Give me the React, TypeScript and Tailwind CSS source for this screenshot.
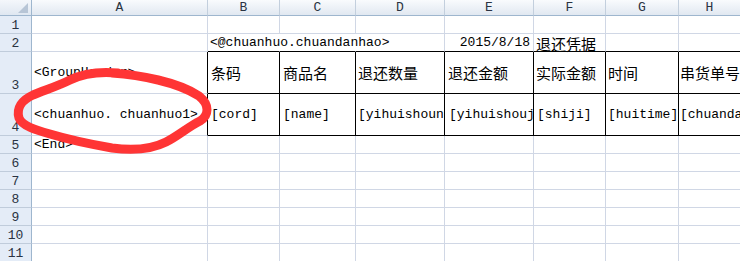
import React from "react";

type CellData = {
  text: string;
  cjk?: boolean;
  right?: boolean;
  clip?: boolean;
  spill?: boolean;
  pad?: string;
};

const columns = ["A", "B", "C", "D", "E", "F", "G", "H"];
const rows = [1, 2, 3, 4, 5, 6, 7, 8, 9, 10, 11];

// sheet contents, keyed by cell address
const cells: Record<string, CellData> = {
  B2: { text: "<@chuanhuo.chuandanhao>", spill: true, pad: "pl-[2px]" },
  E2: { text: "2015/8/18", right: true, pad: "pr-[3px]" },
  F2: { text: "退还凭据", cjk: true, pad: "pl-[2px] pt-[2px]" },
  A3: { text: "<GroupHeader>", pad: "pl-[2px]" },
  B3: { text: "条码", cjk: true, pad: "pl-[3px]" },
  C3: { text: "商品名", cjk: true, pad: "pl-[3px]" },
  D3: { text: "退还数量", cjk: true, pad: "pl-[2px]" },
  E3: { text: "退还金额", cjk: true, pad: "pl-[3px]" },
  F3: { text: "实际金额", cjk: true, pad: "pl-[2px]" },
  G3: { text: "时间", cjk: true, pad: "pl-[2px]" },
  H3: { text: "串货单号", cjk: true, pad: "pl-[1px]" },
  A4: { text: "<chuanhuo. chuanhuo1>", pad: "pl-[2px]" },
  B4: { text: "[cord]", pad: "pl-[3px]" },
  C4: { text: "[name]", pad: "pl-[3px]" },
  D4: { text: "[yihuishounum]", clip: true, pad: "pl-[2px]" },
  E4: { text: "[yihuishoujine]", clip: true, pad: "pl-[4px]" },
  F4: { text: "[shiji]", pad: "pl-[3px]" },
  G4: { text: "[huitime]", pad: "pl-[2px]" },
  H4: { text: "[chuandanhao]", clip: true, pad: "pl-[1px]" },
  A5: { text: "<End>", pad: "pl-[2px]" },
};

const mono = "font-['Liberation_Mono',monospace] text-[13px]";
const cjkFont = "font-['Noto_Sans_CJK_SC',sans-serif] text-[15px]";

const inTable = (col: string, row: number) => col !== "A" && (row === 3 || row === 4);

const SheetCell = ({ col, row }: { col: string; row: number }) => {
  const data = cells[col + row];
  const rightBlack = (row === 3 || row === 4) && col !== "H";
  const bottomBlack = col !== "A" && (row === 2 || inTable(col, row));

  return (
    <div
      className={`relative flex items-center border-r border-b whitespace-nowrap text-black ${
        rightBlack ? "border-r-black" : "border-r-[#d0d7e5]"
      } ${bottomBlack ? "border-b-black" : "border-b-[#d0d7e5]"} ${
        data?.clip ? "overflow-hidden" : "overflow-visible"
      } ${data?.spill ? "z-10" : ""} ${data?.right ? "justify-end" : ""} ${data?.pad ?? ""}`}
    >
      {data &&
        (data.spill ? (
          // text running over empty neighbours hides their gridlines
          <span className={`self-stretch flex items-center bg-white pr-[1px] leading-none ${mono}`}>
            {data.text}
          </span>
        ) : (
          <span className={`leading-none ${data.cjk ? cjkFont : mono}`}>{data.text}</span>
        ))}
    </div>
  );
};

// hand-drawn red marker loop around the A3/A4 tags
const RedCircle = () => (
  <svg
    className="absolute left-0 top-0 pointer-events-none z-20"
    width="740"
    height="261"
    viewBox="0 0 740 261"
  >
    <path
      d="M 112 73 C 140 75, 178 82, 199 96 C 210 105, 209 115, 200 121 C 188 127, 178 136, 166 142 C 152 149, 134 151, 112 148 C 95 145, 70 140, 50 134 C 36 130, 22 126, 19 118 C 16 108, 22 100, 33 95 C 45 90, 58 86, 70 80 C 82 74, 96 71, 118 73"
      fill="none"
      stroke="#ff3535"
      strokeWidth="9"
      strokeLinecap="round"
      strokeLinejoin="round"
    />
  </svg>
);

export default function App() {
  return (
    <div className="relative w-[740px] h-[261px] overflow-hidden bg-white">
      <div className="grid grid-cols-[32px_176px_72px_76px_89px_89px_72px_73px_1fr] grid-rows-[16px_18px_18px_42px_42px_18px_18px_18px_18px_18px_18px_18px]">
        {/* corner */}
        <div className="relative border-r border-b border-r-[#9eb6ce] border-b-[#9eb6ce] bg-linear-to-b from-[#f4f7fb] to-[#dfe7f1]">
          <div className="absolute right-[3px] bottom-[2px] w-0 h-0 border-l-[10px] border-l-transparent border-b-[10px] border-b-[#b7c5d6]" />
        </div>
        {/* column headers */}
        {columns.map((c) => (
          <div
            key={c}
            className="flex items-center justify-center border-r border-b border-r-[#c3cfdd] border-b-[#9eb6ce] bg-linear-to-b from-[#f9fbfd] to-[#e1e8f1] font-['Liberation_Mono',monospace] text-[13px] leading-none text-[#2a3342]"
          >
            {c}
          </div>
        ))}

        {rows.map((r) => (
          <React.Fragment key={r}>
            <div className="flex items-end justify-center pb-[1px] border-r border-b border-r-[#9eb6ce] border-b-[#c0ccdb] bg-[#e4ecf7] font-['Liberation_Mono',monospace] text-[13px] leading-none text-[#2a3342]">
              {r}
            </div>
            {columns.map((c) => (
              <SheetCell key={c} col={c} row={r} />
            ))}
          </React.Fragment>
        ))}
      </div>
      <RedCircle />
    </div>
  );
}
